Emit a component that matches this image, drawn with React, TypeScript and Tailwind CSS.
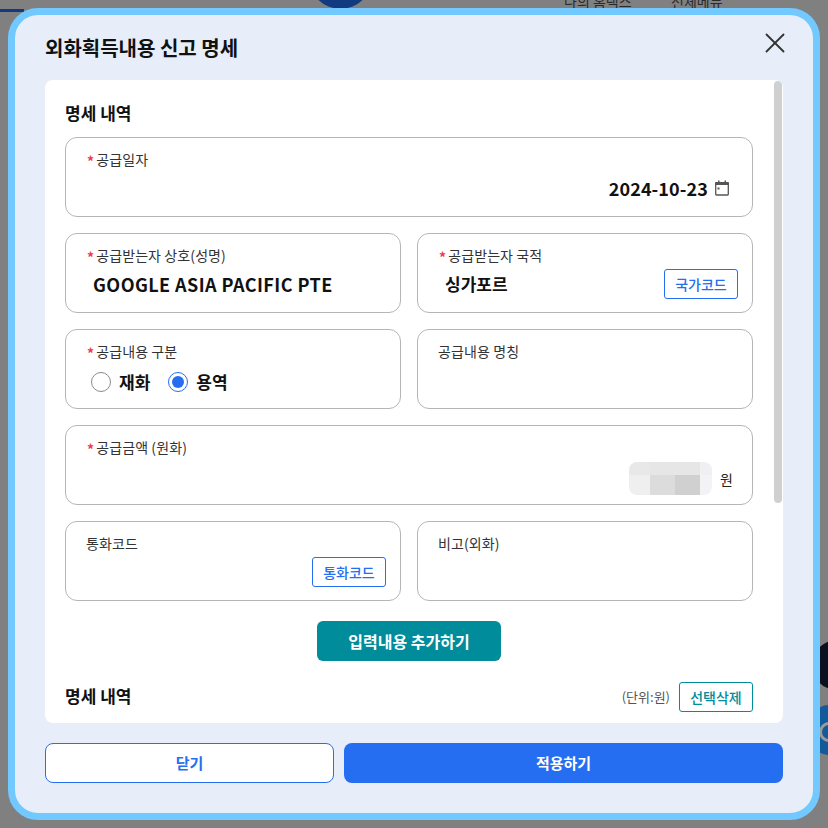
import type { ReactNode } from 'react';
import { X } from 'lucide-react';

function Field({ label, required, children, className = '' }: { label: string; required?: boolean; children?: ReactNode; className?: string }) {
  return (
    <div className={`relative h-20 rounded-xl border border-[#b5b5b5] bg-white pl-5 pr-5 pt-[11px] ${className}`}>
      <div className="flex h-5 items-center text-sm leading-5 tracking-[0.1px] text-[#333]">
        {required && <span className="ml-px mr-[2px] mt-[3px] text-sm font-bold text-[#f0384f]">*</span>}
        {label}
      </div>
      {children}
    </div>
  );
}

function SmallButton({ children }: { children: ReactNode }) {
  return (
    <button className="absolute bottom-[13px] right-[14px] flex h-[30px] w-[74px] items-center justify-center rounded-[3px] border border-[#256ef1] bg-white text-sm font-medium text-[#256ef1]">
      {children}
    </button>
  );
}

function Radio({ label, checked }: { label: string; checked?: boolean }) {
  return (
    <label className="flex items-center gap-2">
      <span className={`flex h-5 w-5 items-center justify-center rounded-full border bg-white ${checked ? 'border-[#256ef1]' : 'border-[#8a8a8a]'}`}>
        {checked && <span className="h-3 w-3 rounded-full bg-[#256ef1]" />}
      </span>
      <span className="text-[17px] font-bold leading-6 text-[#111]">{label}</span>
    </label>
  );
}

export default function App() {
  return (
    <div className="relative h-[828px] w-[828px] overflow-hidden bg-[#808080] font-['Noto_Sans_CJK_KR','Noto_Sans',sans-serif]">
      {/* dimmed page behind the modal */}
      <div className="absolute left-0 top-[9px] h-[3px] w-[24px] bg-[#123a80]" />
      <div className="absolute left-[309px] top-[-54px] h-[63px] w-[63px] rounded-full bg-[#123a80]" />
      <div className="absolute left-[564px] top-[-9px] text-sm leading-5 text-[#2a2a2a]">나의 홈택스</div>
      <div className="absolute left-[671px] top-[-9px] text-sm leading-5 text-[#2a2a2a]">전체메뉴</div>
      <div className="absolute left-[812px] top-[640px] h-[50px] w-[50px] rounded-full bg-[#0a1020]" />
      <div className="absolute left-[805px] top-[705px] h-[50px] w-[50px] rounded-full bg-[#135a9b]" />
      <div className="absolute left-[819px] top-[722px] h-[20px] w-[20px] rounded-full border-[3px] border-[#9a9a9a]" />

      <div className="absolute inset-2 flex flex-col rounded-[30px] border-[7px] border-[#72c9ff] bg-[#e7eef9] px-[30px]">
        <div className="relative flex h-[65px] shrink-0 items-center pt-px">
          <h2 className="text-xl font-bold text-[#111]">외화획득내용 신고 명세</h2>
          <button className="absolute right-[-9px] top-[11px] text-[#333]">
            <X size={34} strokeWidth={1.3} />
          </button>
        </div>

        <div className="relative h-[643px] shrink-0 overflow-hidden rounded-lg bg-white pl-5 pr-[30px]">
          <div className="absolute right-px top-px h-[422px] w-2 rounded-full bg-[#d0d0d0]" />
          <h3 className="flex h-[57px] items-center pt-2 text-[17px] font-bold text-[#111]">명세 내역</h3>

          <div className="grid grid-cols-2 gap-4">
            <Field label="공급일자" required className="col-span-2">
              <div className="mr-[1px] mt-[7px] flex items-center justify-end gap-[5px] text-lg font-semibold leading-6 tracking-[0.1px] text-[#111]">
                2024-10-23
                <svg width="18" height="18" viewBox="0 0 18 18" className="text-[#555]">
                  <path d="M2 6V4.2C2 3.5 2.4 3 3 3h2V1.5h1.5V3h5V1.5H13V3h2c.6 0 1 .5 1 1.2V6z" fill="currentColor" />
                  <path d="M2.7 5v10.3c0 .4.2.7.6.7h11.4c.4 0 .6-.3.6-.7V5" fill="none" stroke="currentColor" strokeWidth="1.3" />
                  <rect x="4.5" y="8.5" width="2" height="2" fill="currentColor" />
                </svg>
              </div>
            </Field>

            <Field label="공급받는자 상호(성명)" required>
              <div className="mt-[7px] pl-[7px] text-lg font-semibold leading-6 tracking-[0.43px] text-[#111]">GOOGLE ASIA PACIFIC PTE</div>
            </Field>
            <Field label="공급받는자 국적" required>
              <div className="mt-[7px] pl-[7px] text-[17px] font-semibold leading-6 text-[#111]">싱가포르</div>
              <SmallButton>국가코드</SmallButton>
            </Field>

            <Field label="공급내용 구분" required>
              <div className="mt-[9px] flex items-center gap-[18px] pl-[5px]">
                <Radio label="재화" />
                <Radio label="용역" checked />
              </div>
            </Field>
            <Field label="공급내용 명칭" />

            <Field label="공급금액 (원화)" required className="col-span-2">
              <div className="mr-[-1px] mt-[5px] flex items-center justify-end gap-2 text-sm text-[#222]">
                {/* blurred amount */}
                <div className="grid h-[33px] w-[83px] grid-cols-[21px_25px_25px_12px] grid-rows-[13px_20px] overflow-hidden rounded-lg">
                  <div className="bg-[#e8e8e8]" />
                  <div className="bg-[#e6e6e6]" />
                  <div className="bg-[#e6e6e6]" />
                  <div className="bg-[#f0f0f2]" />
                  <div className="bg-[#f0efef]" />
                  <div className="bg-[#dcdcdc]" />
                  <div className="bg-[#d0d0d0]" />
                  <div className="bg-[#f3f3f6]" />
                </div>
                원
              </div>
            </Field>

            <Field label="통화코드">
              <SmallButton>통화코드</SmallButton>
            </Field>
            <Field label="비고(외화)" />
          </div>

          <div className="mt-5 flex justify-center">
            <button className="h-10 w-[184px] rounded-md bg-[#008c9a] text-base font-semibold text-white">입력내용 추가하기</button>
          </div>

          <div className="mt-[21px] flex h-[30px] items-center justify-between">
            <h3 className="mt-[-2px] text-[17px] font-bold text-[#111]">명세 내역</h3>
            <div className="flex items-center gap-[9px]">
              <span className="text-[13px] text-[#555]">(단위:원)</span>
              <button className="flex h-[30px] w-[74px] items-center justify-center rounded-[3px] border border-[#008c9a] text-sm font-medium text-[#008c9a]">선택삭제</button>
            </div>
          </div>
        </div>

        <div className="mt-5 flex gap-[10px]">
          <button className="h-10 w-[289px] rounded-lg border border-[#256ef1] bg-white text-[15px] font-semibold text-[#256ef1]">닫기</button>
          <button className="h-10 flex-1 rounded-lg bg-[#256ef1] text-[15px] font-semibold text-white">적용하기</button>
        </div>
      </div>
    </div>
  );
}
